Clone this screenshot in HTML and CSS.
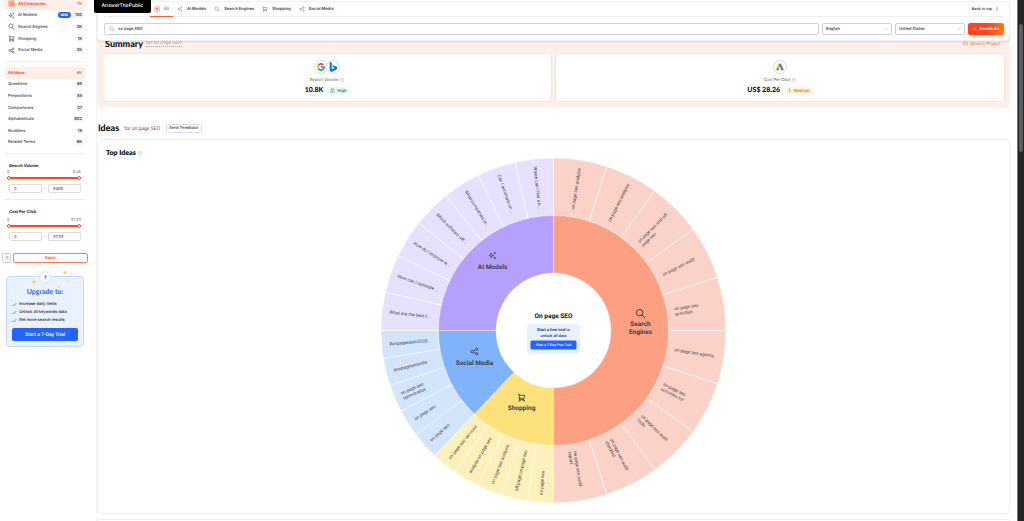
FILE: index.html
```html
<!DOCTYPE html>
<html lang="en">
<head>
<meta charset="utf-8">
<title>AnswerThePublic</title>
<link rel="stylesheet" href="styles.css">
</head>
<body>
<svg class="sprite" aria-hidden="true">
  <symbol id="i-all" viewBox="0 0 24 24"><rect x="3" y="3" width="18" height="18" rx="2"/><path d="M8 8h3v3H8zM14 8h2v3h-2zM8 14h3v2H8zM14 14h2v2h-2z"/></symbol>
  <symbol id="i-ai" viewBox="0 0 24 24"><path d="M9 6c.7 4 2 5.300 6 6-4 .7-5.300 2-6 6-.7-4-2-5.300-6-6 4-.7 5.300-2 6-6zM18 3v5M15.500 5.500h5M18 16v5M15.500 18.500h5"/></symbol>
  <symbol id="i-search" viewBox="0 0 24 24"><circle cx="10" cy="10" r="7"/><path d="M15 15l7 7"/></symbol>
  <symbol id="i-cart" viewBox="0 0 24 24"><path d="M2 3h4v14h13M6 6h15l-2 8H6"/><circle cx="7" cy="20" r="2"/><circle cx="18" cy="20" r="2"/></symbol>
  <symbol id="i-share" viewBox="0 0 24 24"><circle cx="6" cy="12" r="3.500"/><circle cx="18" cy="6" r="3"/><circle cx="18" cy="18" r="3"/><path d="M9 10.500l6-3M9 13.500l6 3"/></symbol>
  <symbol id="i-info" viewBox="0 0 24 24"><circle cx="12" cy="12" r="10"/><path d="M9 9.500c0-4 6-4 6-.5 0 2-3 2-3 4.500M12 16v2"/></symbol>
  <symbol id="i-down" viewBox="0 0 24 24"><path d="M4 8l8 8 8-8"/></symbol>
  <symbol id="i-check" viewBox="0 0 24 24"><path d="M3 13l6 6L21 5"/></symbol>
  <symbol id="i-up" viewBox="0 0 24 24"><path d="M12 21V3M5 10l7-7 7 7"/></symbol>
  <symbol id="i-top" viewBox="0 0 24 24"><path d="M5 21h8V4M8 9l5-6 5 6"/></symbol>
  <symbol id="i-reset" viewBox="0 0 24 24"><path d="M18 6a8 8 0 1 0 2 7M19 2v6h-6"/></symbol>
  <symbol id="i-folder" viewBox="0 0 24 24"><path d="M21 12V7H11L9 4H3v16h8M14 17h8M18 13l4 4-4 4"/></symbol>
  <symbol id="i-users" viewBox="0 0 24 24"><circle cx="9" cy="7" r="4"/><path d="M2 21v-3c0-5 14-5 14 0v3zM16 3c5 0 5 8 0 8M18 14c3 1 4 3 4 7"/></symbol>
  <symbol id="i-coin" viewBox="0 0 24 24"><path d="M16 7c-2-3-8-2-8 1s8 4 8 7-6 4-8 1M12 2v20"/></symbol>
  <symbol id="i-star" viewBox="0 0 24 24"><path d="M12 0c1 8 4 11 12 12-8 1-11 4-12 12-1-8-4-11-12-12C8 11 11 8 12 0z"/></symbol>
</svg>

<div class="app">
  <aside class="sidebar">
    <nav class="menu categories" aria-label="Categories">
      <a class="item active" href="#all"><svg class="icon"><use href="#i-all"/></svg><span class="name">All Categories</span><span class="count">7K</span></a>
      <a class="item" href="#ai"><svg class="icon"><use href="#i-ai"/></svg><span class="name">AI Models</span><span class="new">NEW</span><span class="count">100</span></a>
      <a class="item" href="#search"><svg class="icon"><use href="#i-search"/></svg><span class="name">Search Engines</span><span class="count">3K</span></a>
      <a class="item" href="#shopping"><svg class="icon"><use href="#i-cart"/></svg><span class="name">Shopping</span><span class="count">1K</span></a>
      <a class="item" href="#social"><svg class="icon"><use href="#i-share"/></svg><span class="name">Social Media</span><span class="count">3K</span></a>
    </nav>
    <nav class="menu types" aria-label="Ideas">
      <a class="item active" href="#ideas"><span class="name">All Ideas</span><span class="count">6K</span></a>
      <a class="item" href="#q"><span class="name">Questions</span><span class="count">68</span></a>
      <a class="item" href="#p"><span class="name">Prepositions</span><span class="count">55</span></a>
      <a class="item" href="#c"><span class="name">Comparisons</span><span class="count">27</span></a>
      <a class="item" href="#a"><span class="name">Alphabeticals</span><span class="count">602</span></a>
      <a class="item" href="#n"><span class="name">Numbers</span><span class="count">18</span></a>
      <a class="item" href="#r"><span class="name">Related Terms</span><span class="count">6K</span></a>
    </nav>
    <section class="filter">
      <h3>Search Volume</h3>
      <div class="limits"><span>0</span><span>5.4k</span></div>
      <div class="slider"><input type="range" min="0" max="5400" value="0" aria-label="Lowest search volume"><input type="range" min="0" max="5400" value="5400" aria-label="Highest search volume"></div>
      <div class="bounds"><input type="text" value="0" aria-label="Minimum volume"><span>-</span><input type="text" value="5400" aria-label="Maximum volume"></div>
    </section>
    <section class="filter cost">
      <h3>Cost Per Click</h3>
      <div class="limits"><span>0</span><span>37.23</span></div>
      <div class="slider"><input type="range" min="0" max="37" value="0" aria-label="Lowest cost"><input type="range" min="0" max="37" value="37" aria-label="Highest cost"></div>
      <div class="bounds"><input type="text" value="0" aria-label="Minimum cost"><span>-</span><input type="text" value="37.23" aria-label="Maximum cost"></div>
    </section>
    <div class="actions">
      <button class="reset" aria-label="Reset"><svg class="icon"><use href="#i-reset"/></svg></button>
      <button class="apply">Apply</button>
    </div>
    <section class="upgrade">
      <svg class="sparkles" viewBox="0 0 120 50" aria-hidden="true"><use href="#i-star" x="16" y="24" width="13" height="13"/><use href="#i-star" x="93" y="0" width="13" height="13"/><use href="#i-star" x="79" y="38" width="8" height="8"/><use href="#i-star" x="103" y="22" width="8" height="8" opacity=".5"/><circle cx="32" cy="10" r="2"/><circle cx="117" cy="10" r="2"/></svg>
      <span class="badge"><svg class="icon"><use href="#i-up"/></svg></span>
      <h2>Upgrade to:</h2>
      <ul>
        <li><svg class="icon"><use href="#i-check"/></svg>Increase daily limits</li>
        <li><svg class="icon"><use href="#i-check"/></svg>Unlock all keywords data</li>
        <li><svg class="icon"><use href="#i-check"/></svg>Get more search results</li>
      </ul>
      <button>Start a 7-Day Trial</button>
    </section>
  </aside>

  <main class="main">
    <header class="topbar">
      <a class="brand" href="#home">AnswerThePublic</a>
      <div class="tabs">
        <a class="tab on" href="#all"><svg class="icon"><use href="#i-all"/></svg>All</a>
        <a class="tab" href="#ai"><svg class="icon"><use href="#i-ai"/></svg>AI Models</a>
        <a class="tab" href="#search"><svg class="icon"><use href="#i-search"/></svg>Search Engines</a>
        <a class="tab" href="#shopping"><svg class="icon"><use href="#i-cart"/></svg>Shopping</a>
        <a class="tab" href="#social"><svg class="icon"><use href="#i-share"/></svg>Social Media</a>
        <a class="totop" href="#top">Back to top<svg class="icon"><use href="#i-top"/></svg></a>
      </div>
      <form class="searchbar">
        <label class="field query"><svg class="icon"><use href="#i-search"/></svg><input type="text" value="on page SEO" aria-label="Keyword"></label>
        <label class="field pick"><select aria-label="Language"><option>English</option></select><svg class="icon"><use href="#i-down"/></svg></label>
        <label class="field pick"><select aria-label="Country"><option>United States</option></select><svg class="icon"><use href="#i-down"/></svg></label>
        <button type="button" class="go"><svg class="icon"><use href="#i-search"/></svg>Search All</button>
      </form>
    </header>

    <section class="summary">
      <div class="summary-head">
        <h1>Summary</h1><span class="for">for on page SEO</span>
        <a class="move" href="#project"><svg class="icon"><use href="#i-folder"/></svg>Move to Project</a>
      </div>
      <div class="stats">
        <article class="stat">
          <div class="logos">
            <span class="logo"><svg viewBox="0 0 24 24"><g fill="none" stroke-width="5"><path stroke="#ea4335" d="M19 5.500A9.500 9.500 0 0 0 4 7.500"/><path stroke="#fbbc05" d="M4 7.500a9.500 9.500 0 0 0 0 9"/><path stroke="#34a853" d="M4 16.500a9.500 9.500 0 0 0 14 3"/><path stroke="#4285f4" d="M18 19.500a9.500 9.500 0 0 0 3.500-7.500H12"/></g></svg></span>
            <span class="logo"><svg class="bing" viewBox="0 0 24 24"><path fill="#0d72c4" d="M4 0l5 2v16l7-4-4-2-2-5 12 5v5L9 24l-5-3z"/></svg></span>
          </div>
          <p class="label">Search Volume <svg class="icon"><use href="#i-info"/></svg></p>
          <p class="value">10.8K <span class="tag high"><svg class="icon"><use href="#i-users"/></svg>High</span></p>
        </article>
        <article class="stat">
          <div class="logos">
            <span class="logo"><svg viewBox="0 0 24 24" fill="none" stroke-width="7" stroke-linecap="round"><path stroke="#fbbc04" d="M10 6L5 16"/><path stroke="#3c7df0" d="M12 5l7 14"/><path stroke="#34a853" d="M5 19h.01"/></svg></span>
          </div>
          <p class="label">Cost Per Click <svg class="icon"><use href="#i-info"/></svg></p>
          <p class="value">US$ 28.26 <span class="tag medium"><svg class="icon"><use href="#i-coin"/></svg>Medium</span></p>
        </article>
      </div>
    </section>

    <div class="ideas-head">
      <h1>Ideas</h1><span class="for">for on page SEO</span><button>Send Feedback</button>
    </div>
    <section class="card">
      <h2>Top Ideas <svg class="icon"><use href="#i-info"/></svg></h2>
      <svg class="wheel" viewBox="0 0 690 690" role="img" aria-label="Top ideas by category">
        <g id="slices"></g>
        <text class="core" x="345" y="319">On page SEO</text>
        <foreignObject x="292" y="332" width="106" height="60">
          <div class="trial"><p><b>Start a free trial</b> to<br>unlock all data</p><button>Start a 7-Day Free Trial</button></div>
        </foreignObject>
      </svg>
    </section>
    <section class="card next"></section>
  </main>
  <div class="scroll" aria-hidden="true"><span></span></div>
</div>
<script src="wheel.js"></script>
</body>
</html>
```
FILE: styles.css
```css
* { box-sizing: border-box; margin: 0; padding: 0; }
html, body { height: 100%; overflow: hidden; }
body { background: #fff; color: #3c3f48; font: 4px/6px Inter, "Liberation Sans", sans-serif; text-rendering: geometricPrecision; }
a { color: inherit; text-decoration: none; }
button, input, select { font: inherit; color: inherit; text-rendering: inherit; }
button { cursor: pointer; }
ul { list-style: none; }
.sprite { position: absolute; width: 0; height: 0; }
.icon { width: 6px; height: 6px; flex: none; fill: none; stroke: currentColor; stroke-width: 2; }

.app { display: flex; height: 100vh; overflow: hidden; }

/* Sidebar */
.sidebar { width: 97px; flex: none; border-right: 1px solid #f3f4f7; padding: 0 11px 0 5px; }
.menu { display: flex; flex-direction: column; }
.categories { height: 58px; margin-top: -2px; }
.types { height: 92px; border-top: 1px solid #eceef3; margin-top: 5px; padding: 5px 0; }
.item { flex: 1; display: flex; align-items: center; padding: 0 2px 0 3px; border-radius: 4px; font-weight: 500; }
.categories .icon { width: 7px; height: 7px; margin-right: 3px; }
.item .name { flex: 1; }
.item.active { background: #ffefea; box-shadow: 0 0 1px #ffb9a4; color: #ff4a1c; font-weight: 700; }
.count { background: #f0f1f4; border-radius: 2px; padding: 0 1px; font-weight: 600; }
.active .count { background: #fff8f6; }
.new { background: #2463f5; color: #fff; border-radius: 3px; padding: 0 3px; font-size: 3px; font-weight: 800; margin-right: 3px; }
.filter { border-top: 1px solid #eaeaf8; padding: 9px 4px 6px 2px; }
.filter.cost { padding-bottom: 12px; }
.filter h3 { font-size: 4px; font-weight: 700; color: #222; padding-left: 2px; }
.limits { display: flex; justify-content: space-between; color: #777; }
.cost .limits { margin-top: 2px; }
.slider { display: grid; height: 6px; align-items: center; background: linear-gradient(#ff4a1c, #ff4a1c) center / 100% 2px no-repeat; }
.slider input { grid-area: 1 / 1; appearance: none; width: 100%; height: 4px; background: none; pointer-events: none; }
.slider input::-webkit-slider-thumb { appearance: none; pointer-events: auto; width: 4px; height: 4px; border-radius: 50%; border: 1px solid #ff4a1c; background: #fff; }
.bounds { display: flex; align-items: center; justify-content: space-between; margin-top: 3px; padding-left: 2px; }
.bounds input { width: 33px; height: 9px; border: 1px solid #d9dce3; border-radius: 2px; padding: 0 4px; background: #fff; }
.actions { display: flex; gap: 2px; margin: 0 -3px; }
.actions button { height: 10px; background: #fff; border: 1px solid #ccc; border-radius: 2px; }
.actions .reset { width: 9px; display: grid; place-items: center; }
.reset .icon { width: 4px; height: 4px; }
.actions .apply { flex: 1; border-color: #ff7a5c; color: #ff4a1c; font-weight: 600; }
.upgrade { position: relative; margin: 13px 1px 0; border: 1px solid #bfdbfe; border-radius: 4px; background: #eaf2ff; padding: 10px 5px 5px; color: #222; }
.badge { position: absolute; top: -6px; left: 50%; margin-left: -6px; width: 12px; height: 12px; display: grid; place-items: center; border-radius: 50%; background: #fff; border: 1px solid #cfe2ff; color: #2463f5; }
.badge .icon { width: 5px; height: 5px; stroke-width: 3; }
.sparkles { position: absolute; top: -7px; left: 18px; width: 48px; height: 20px; fill: #fbc94a; }
.upgrade h2 { font: 700 7px/10px Lato, sans-serif; color: #2463f5; text-align: center; margin-bottom: 3px; }
.upgrade li { display: flex; align-items: center; gap: 2px; height: 8px; font-weight: 500; }
.upgrade li .icon { width: 5px; height: 5px; stroke: #2463f5; stroke-width: 3; }
.upgrade button { width: 100%; height: 13px; margin-top: 4px; border: 0; border-radius: 2px; background: #2463ff; color: #fff; font: 500 5px/6px Roboto, sans-serif; }

/* Main column */
.main { flex: 1; min-width: 0; padding-right: 7px; display: flex; flex-direction: column; }
.topbar { position: relative; z-index: 1; flex: none; margin-top: 1px; border: 1px solid #edf0f4; border-radius: 4px; background: #fff; padding: 0 5px 5px 6px; box-shadow: 0 1px 2px #0000001c; }
.brand { position: absolute; left: -4px; top: -2px; width: 57px; height: 13px; border-radius: 0 0 2px 2px; background: #000; color: #fff; font-size: 5px; font-weight: 500; line-height: 12px; text-align: center; }
.tabs { display: flex; height: 15px; border-bottom: 1px solid #edeef1; padding-left: 46px; }
.tab { display: flex; align-items: center; gap: 4px; padding: 0 4px; font-weight: 600; }
.tab .icon { color: #777b86; }
.tab.on, .tab.on .icon { color: #ff5a30; }
.tab.on { box-shadow: 0 1px #ff5a30; }
.totop { display: flex; align-items: center; gap: 3px; margin-left: auto; padding-right: 5px; font: 500 4px/6px Roboto, sans-serif; }
.totop .icon { width: 4px; height: 4px; }
.searchbar { display: flex; gap: 3px; padding-top: 6px; }
.field { display: flex; align-items: center; height: 12px; border: 1px solid #cfd2d8; border-radius: 2px; padding: 0 4px; font-weight: 500; color: #333; }
.field .icon { color: #888c96; }
.field input { flex: 1; border: 0; outline: 0; background: none; padding-left: 3px; }
.query { flex: 1; }
.pick { width: 70px; padding: 0 3px; }
.pick select { flex: 1; appearance: none; border: 0; background: none; }
.pick .icon { width: 4px; height: 4px; }
.go { display: flex; align-items: center; justify-content: center; gap: 2px; width: 36px; height: 12px; border: 0; border-radius: 2px; background: linear-gradient(90deg, #ff4320 50%, #ff7a10); color: #fff; font-weight: 600; box-shadow: 0 1px 3px #ff4a1c55; }
.go .icon { width: 4px; height: 4px; }

h1 { font: 900 9px/12px Lato, sans-serif; color: #111; }
.for { font: 5px/6px Roboto, sans-serif; color: #555; }
.summary { flex: none; margin-top: -5px; background: #ffefeb; border-radius: 0 0 4px 4px; padding: 0 5px 5px; }
.summary-head { display: flex; align-items: center; padding: 0 5px 2px 3px; height: 17px; }
.summary .for { color: #c3a29b; margin-left: 3px; border-bottom: 1px dotted #c3a29b; }
.move { display: flex; align-items: center; gap: 2px; margin-left: auto; color: #ff4a1c; }
.move .icon { width: 5px; height: 5px; }
.stats { display: grid; grid-template-columns: 1fr 1fr; gap: 3px; }
.stat { height: 49px; border: 1px solid #fbe3dc; border-radius: 3px; background: #fff; padding-top: 6px; display: flex; flex-direction: column; align-items: center; }
.logos { display: flex; }
.logo { width: 14px; height: 14px; border: 1px solid #dadce2; border-radius: 50%; background: #fff; display: grid; place-items: center; }
.logo + .logo { margin-left: -2px; }
.logo svg { width: 8px; height: 8px; }
.logo .bing { width: 10px; height: 10px; }
.label { display: flex; align-items: center; gap: 2px; margin-top: 3px; color: #555; }
.label .icon { width: 4px; height: 4px; color: #999; }
.value { display: flex; align-items: center; gap: 5px; margin-top: 3px; font: 900 7px/9px Lato, sans-serif; color: #111; }
.tag { display: flex; align-items: center; gap: 2px; height: 7px; border-radius: 4px; padding: 0 3px 0 2px; font: 600 4px/6px Inter, sans-serif; }
.tag .icon { width: 5px; height: 5px; }
.high { background: #e2f8f0; color: #16936b; }
.medium { background: #fff5dc; color: #ee7a10; }

.ideas-head { display: flex; align-items: center; height: 12px; margin: 15px 0 5px 1px; flex: none; }
.ideas-head .for { margin: 1px 6px 0 5px; }
.ideas-head button { height: 9px; padding: 0 2px; border: 1px solid #dcdde2; border-radius: 2px; background: #fff; font-weight: 500; }
.card { flex: none; border: 1px solid #edeef3; border-radius: 4px; padding: 8px 8px 10px; }
.card h2 { display: flex; align-items: center; gap: 2px; font: 800 7px/10px Lato, sans-serif; color: #111; }
.card h2 .icon { width: 4px; height: 4px; color: #999; }
.card.next { flex: 1; min-height: 0; margin-top: 5px; padding: 0; border-bottom: 0; border-radius: 4px 4px 0 0; }
.wheel { display: block; width: 100%; max-width: 345px; margin: 0 auto; }
.wheel text { font-family: Roboto, sans-serif; font-size: 9px; fill: #4a4044; }
.wheel text.core, .wheel text.group { font-size: 13px; font-weight: 700; text-anchor: middle; fill: #111; }
.wheel text.group { fill: #40404a; }
.wheel .icon { stroke: #333; }
.trial { height: 60px; border-radius: 8px; background: #e9f1fe; padding: 6px 7px; text-align: center; color: #26345c; font: 500 8px/11px Roboto, sans-serif; }
.trial button { display: block; width: 100%; height: 18px; margin-top: 5px; border: 0; border-radius: 3px; background: #2463ff; color: #fff; font: 500 7px/10px Roboto, sans-serif; white-space: nowrap; }

.scroll { width: 7px; flex: none; background: #222425; border-left: 1px solid #777; padding: 24px 1px 0; }
.scroll span { display: block; height: 128px; border-radius: 2px; background: #5b5d5e; }
```
FILE: wheel.js
```js
const C = 345;
const groups = [
  { from: 0, to: 180, fill: "#fd9f82", tint: "#fbd2c7", name: ["Search", "Engines"], x: 519, y: 336, icon: "i-search", iy: 311, size: 22,
    ideas: ["on page seo analyzer", "on page seo analysis", "on page seo and off|page seo", "on page seo audit", "on page seo|activities", "on page seo agency", "on page seo|activities list", "on page seo audit|tools", "on page seo audit|checklist", "on page seo audit|report"] },
  { from: 180, to: 223.5, fill: "#fde17a", tint: "#fcf0bb", name: ["Shopping"], x: 281, y: 504, icon: "i-cart", iy: 479, size: 18,
    ideas: ["on page seo", "off page on page seo", "on page seo analysis", "analyze on page seo", "on page seo services"] },
  { from: 223.5, to: 270, fill: "#80b3fa", tint: "#d3e4fd", name: ["Social Media"], x: 187, y: 413, icon: "i-share", iy: 387, size: 18,
    ideas: ["on page seo", "on page seo", "on page seo|optimization", "#onpageseoindia", "#onpageseoin2020"] },
  { from: 270, to: 360, fill: "#b5a1fb", tint: "#e6e1fe", name: ["AI Models"], x: 223, y: 222, icon: "i-ai", iy: 195, size: 18,
    ideas: ["What are the best t...", "How can I optimize ...", "How do I improve w...", "Which software off...", "What companies pr...", "Can I automate on ...", "Where can I find a n..."] }
];

const point = (r, deg) => {
  const a = deg * Math.PI / 180;
  return (C + r * Math.sin(a)).toFixed(1) + " " + (C - r * Math.cos(a)).toFixed(1);
};
const ring = (r1, r2, a, b, fill, line) =>
  `<path fill="${fill}" stroke="#fff" stroke-opacity=".6" stroke-width="${line}" d="M${point(r1, a)}L${point(r2, a)}A${r2} ${r2} 0 0 1 ${point(r2, b)}L${point(r1, b)}A${r1} ${r1} 0 0 0 ${point(r1, a)}Z"/>`;

let out = "";
for (const g of groups) {
  const step = (g.to - g.from) / g.ideas.length;
  g.ideas.forEach((idea, i) => {
    const a = g.from + i * step;
    const mid = a + step / 2;
    out += ring(230, 345, a, a + step, g.tint, 2);
    const right = mid < 180;
    const turn = right ? mid - 90 : mid + 90;
    const x = right ? 245 : -330;
    const lines = idea.split("|");
    const top = 3 - (lines.length - 1) * 5;
    out += `<g transform="translate(${C} ${C}) rotate(${turn})">` +
      lines.map((t, n) => `<text x="${x}" y="${top + n * 11}">${t}</text>`).join("") + "</g>";
  });
}
for (const g of groups) {
  out += ring(115, 230, g.from, g.to, g.fill, 1);
  out += `<svg class="icon" x="${g.x - g.size / 2}" y="${g.iy - g.size / 2}" width="${g.size}" height="${g.size}" style="width:${g.size}px;height:${g.size}px"><use href="#${g.icon}"/></svg>`;
  out += g.name.map((t, n) => `<text class="group" x="${g.x}" y="${g.y + n * 16}">${t}</text>`).join("");
}
document.getElementById("slices").innerHTML = out;
```
